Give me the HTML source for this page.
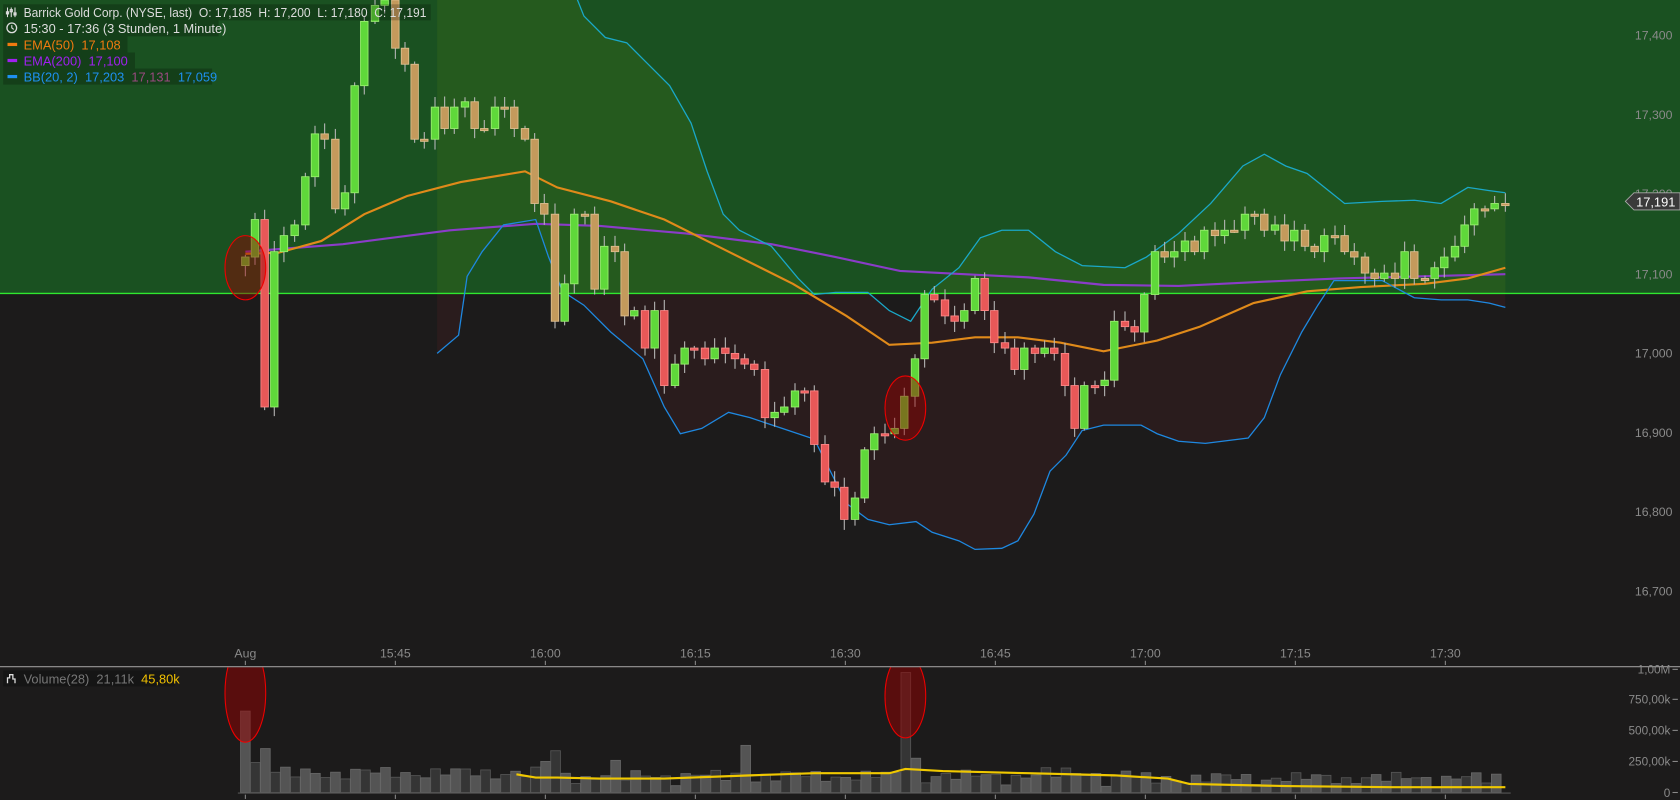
<!DOCTYPE html>
<html><head><meta charset="utf-8"><style>
html,body{margin:0;padding:0;background:#1c1b1b;overflow:hidden}
svg{display:block}
text{font-family:"Liberation Sans",sans-serif;white-space:pre}
</style></head><body>
<svg id="s" width="1680" height="800" viewBox="0 0 1568 747" preserveAspectRatio="none" xmlns="http://www.w3.org/2000/svg">
<defs>
<clipPath id="ca"><rect x="0" y="-20" width="1568" height="294"/></clipPath>
<clipPath id="cb"><rect x="0" y="274" width="1568" height="348"/></clipPath>
<clipPath id="cm"><rect x="0" y="0" width="1568" height="622"/></clipPath>
<clipPath id="vc"><rect x="0" y="623" width="1568" height="130"/></clipPath>
</defs>
<rect x="0" y="0" width="1568" height="747" fill="#1c1b1b"/>
<rect x="0" y="0" width="1568" height="274" fill="#1a5121"/>
<g id="band"></g>
<line x1="0" y1="274" x2="1568" y2="274" stroke="#2fe82f" stroke-width="1.3"/>
<g id="lines" clip-path="url(#cm)"></g>
<g id="candles" clip-path="url(#cm)"></g>
<g id="vol"></g>
<ellipse cx="229" cy="250" rx="19" ry="30" fill="rgba(150,0,0,0.45)" stroke="#e00" stroke-width="1"/>
<ellipse cx="845" cy="381" rx="19" ry="30" fill="rgba(150,0,0,0.45)" stroke="#e00" stroke-width="1"/>
<g clip-path="url(#vc)">
<ellipse cx="229" cy="647" rx="19" ry="46" fill="rgba(150,0,0,0.5)" stroke="#e00" stroke-width="1"/>
<ellipse cx="845" cy="650" rx="19" ry="39" fill="rgba(150,0,0,0.5)" stroke="#e00" stroke-width="1"/>
</g>
<g font-size="11.5" fill="#8a8a8a" text-anchor="end">
<text x="1561" y="37">17,400</text><text x="1561" y="111">17,300</text><text x="1561" y="185">17,200</text>
<text x="1561" y="260">17,100</text><text x="1561" y="334">17,000</text><text x="1561" y="408">16,900</text>
<text x="1561" y="482">16,800</text><text x="1561" y="556">16,700</text>
</g>
<path d="M1517 188 L1525 180 L1568 180 L1568 196 L1525 196 Z" fill="#3a3a3a" stroke="#aaa" stroke-width="0.8"/>
<text x="1527" y="193" font-size="12" fill="#fff">17,191</text>
<g font-size="11.5" fill="#8a8a8a" text-anchor="middle">
<text x="229" y="614">Aug</text><text x="369" y="614">15:45</text><text x="509" y="614">16:00</text>
<text x="649" y="614">16:15</text><text x="789" y="614">16:30</text><text x="929" y="614">16:45</text>
<text x="1069" y="614">17:00</text><text x="1209" y="614">17:15</text><text x="1349" y="614">17:30</text>
</g>
<g stroke="#888" stroke-width="1">
<line x1="229" y1="617" x2="229" y2="621"/><line x1="369" y1="617" x2="369" y2="621"/><line x1="509" y1="617" x2="509" y2="621"/><line x1="649" y1="617" x2="649" y2="621"/><line x1="789" y1="617" x2="789" y2="621"/><line x1="929" y1="617" x2="929" y2="621"/><line x1="1069" y1="617" x2="1069" y2="621"/><line x1="1209" y1="617" x2="1209" y2="621"/><line x1="1349" y1="617" x2="1349" y2="621"/>
<line x1="229" y1="742" x2="229" y2="746"/><line x1="369" y1="742" x2="369" y2="746"/><line x1="509" y1="742" x2="509" y2="746"/><line x1="649" y1="742" x2="649" y2="746"/><line x1="789" y1="742" x2="789" y2="746"/><line x1="929" y1="742" x2="929" y2="746"/><line x1="1069" y1="742" x2="1069" y2="746"/><line x1="1209" y1="742" x2="1209" y2="746"/><line x1="1349" y1="742" x2="1349" y2="746"/>
</g>
<line x1="0" y1="622.5" x2="1568" y2="622.5" stroke="#999" stroke-width="1"/>
<g font-size="11" fill="#8a8a8a" text-anchor="end">
<text x="1559" y="629">1,00M</text><text x="1559" y="657">750,00k</text><text x="1559" y="686">500,00k</text><text x="1559" y="715">250,00k</text><text x="1559" y="744">0</text>
</g>
<g stroke="#8a8a8a"><line x1="1561" y1="625" x2="1566" y2="625"/><line x1="1561" y1="653" x2="1566" y2="653"/><line x1="1561" y1="682" x2="1566" y2="682"/><line x1="1561" y1="711" x2="1566" y2="711"/><line x1="1561" y1="740" x2="1566" y2="740"/></g>
<g font-size="12">
<rect x="3" y="4" width="399" height="15" fill="rgba(0,0,0,0.22)"/>
<rect x="3" y="19" width="201" height="15" fill="rgba(0,0,0,0.22)"/>
<rect x="3" y="34" width="116" height="15" fill="rgba(0,0,0,0.22)"/>
<rect x="3" y="49" width="123" height="15" fill="rgba(0,0,0,0.22)"/>
<rect x="3" y="64" width="195" height="15" fill="rgba(0,0,0,0.22)"/>
<g stroke="#ddd" stroke-width="1" fill="none"><line x1="7" y1="7" x2="7" y2="16"/><line x1="10.5" y1="7" x2="10.5" y2="16"/><line x1="14" y1="7" x2="14" y2="16"/><rect x="6" y="11" width="2" height="2"/><rect x="9.5" y="9" width="2" height="2"/><rect x="13" y="12" width="2" height="2"/></g>
<text x="22" y="16" fill="#ddd" textLength="376" lengthAdjust="spacingAndGlyphs">Barrick Gold Corp. (NYSE, last)  O: 17,185  H: 17,200  L: 17,180  C: 17,191</text>
<circle cx="11" cy="26" r="4.5" fill="none" stroke="#ddd" stroke-width="1.2"/><path d="M11 23.5 V26 L12.8 27.5" stroke="#ddd" fill="none" stroke-width="1"/>
<text x="22" y="31" fill="#ddd">15:30 - 17:36 (3 Stunden, 1 Minute)</text>
<rect x="7" y="40" width="9" height="3" fill="#f07a10"/><text x="22" y="46" fill="#f07a10">EMA(50)  17,108</text>
<rect x="7" y="55" width="9" height="3" fill="#a020f0"/><text x="22" y="61" fill="#a020f0">EMA(200)  17,100</text>
<rect x="7" y="70" width="9" height="3" fill="#1e90f0"/><text x="22" y="76" fill="#1e90f0">BB(20, 2)  17,203  <tspan fill="#9a4a80">17,131</tspan>  17,059</text>
<rect x="3" y="626" width="160" height="15" fill="rgba(0,0,0,0.22)"/>
<path d="M7 638 V633 H9 V630 H12 V634 H14 V638" fill="none" stroke="#ddd" stroke-width="1.2"/>
<text x="22" y="638" fill="#777">Volume(28)  21,11k  <tspan fill="#f0c000">45,80k</tspan></text>
</g>
</svg>
<script>
var NS="http://www.w3.org/2000/svg";
function el(p,t,a){var e=document.createElementNS(NS,t);for(var k in a)e.setAttribute(k,a[k]);p.appendChild(e);return e;}
function pts(a){return a.map(function(p){return p[0]+","+p[1]}).join(" ");}
(function(){
var up=[[408,-10],[535,-10],[545,15],[565,35],[585,40],[600,55],[625,80],[645,115],[660,160],[675,200],[690,215],[720,230],[745,260],[760,275],[780,273],[810,273],[830,290],[850,300],[870,270],[895,250],[915,222],[935,215],[960,215],[985,235],[1010,248],[1050,250],[1070,240],[1100,218],[1130,190],[1160,155],[1180,144],[1200,155],[1220,162],[1240,178],[1255,190],[1290,188],[1320,187],[1345,190],[1370,175],[1390,178],[1405,180]];
var lo=[[408,330],[428,313],[436,258],[450,235],[470,210],[500,205],[512,240],[525,272],[545,285],[570,310],[600,335],[620,380],[635,405],[655,400],[680,385],[700,390],[730,400],[760,410],[790,470],[810,485],[830,490],[855,487],[870,497],[895,505],[910,513],[935,512],[950,505],[965,480],[980,440],[995,425],[1010,402],[1030,397],[1065,397],[1080,405],[1100,412],[1125,414],[1165,409],[1180,390],[1195,350],[1215,310],[1230,285],[1245,262],[1290,262],[1320,278],[1345,280],[1370,280],[1390,283],[1405,287]];
var poly=pts(up.concat(lo.slice().reverse()));
var band=document.getElementById("band");
el(band,"polygon",{points:poly,fill:"#255a1e","clip-path":"url(#ca)"});
el(band,"polygon",{points:poly,fill:"#2a1c1d","clip-path":"url(#cb)"});
var L=document.getElementById("lines");
var ema50=[[229,237],[260,236],[300,225],[340,200],[380,183],[430,170],[490,160],[520,175],[570,188],[620,205],[680,235],[740,265],[790,295],[830,322],[870,320],[910,315],[950,315],[990,320],[1030,328],[1080,318],[1120,305],[1170,283],[1220,272],[1270,268],[1330,265],[1370,260],[1405,250]];
var ema200=[[229,235],[320,228],[420,215],[500,209],[560,211],[640,218],[720,228],[780,240],[840,253],[900,256],[960,259],[1030,266],[1100,267],[1180,263],[1250,260],[1405,256]];
el(L,"polyline",{points:pts(ema200),fill:"none",stroke:"#8a3cc8","stroke-width":2});
el(L,"polyline",{points:pts(ema50),fill:"none",stroke:"#e08a1a","stroke-width":2});
el(L,"polyline",{points:pts(up),fill:"none",stroke:"#1aa8c8","stroke-width":1.2});
el(L,"polyline",{points:pts(lo),fill:"none",stroke:"#1e88e0","stroke-width":1.2});
var kf=[[229,240],[238,205],[247,380],[256,235],[265,220],[275,210],[285,165],[294,125],[303,130],[313,195],[322,180],[331,80],[340,20],[350,5],[359,0],[369,45],[378,60],[387,130],[396,130],[406,100],[415,120],[424,100],[434,95],[443,120],[452,120],[462,100],[471,100],[480,120],[490,130],[499,190],[508,200],[518,300],[527,265],[536,200],[546,200],[555,270],[564,230],[574,235],[583,295],[592,290],[602,325],[611,290],[620,360],[630,340],[639,325],[648,325],[658,335],[667,325],[677,330],[686,335],[695,340],[704,345],[714,390],[723,385],[732,380],[742,365],[751,365],[760,415],[770,450],[779,455],[788,485],[798,465],[807,420],[816,405],[826,405],[835,400],[844,370],[854,335],[863,275],[872,280],[882,295],[891,300],[900,290],[910,260],[919,290],[928,320],[938,325],[947,345],[956,325],[966,330],[975,325],[984,330],[994,360],[1003,400],[1012,360],[1022,360],[1031,355],[1040,300],[1050,305],[1059,310],[1068,275],[1078,235],[1087,240],[1096,235],[1106,225],[1115,235],[1124,215],[1134,220],[1143,215],[1152,215],[1162,200],[1171,200],[1180,215],[1190,210],[1199,225],[1208,215],[1218,230],[1227,235],[1236,220],[1246,220],[1255,235],[1264,240],[1274,255],[1283,260],[1292,255],[1302,260],[1311,235],[1320,260],[1330,260],[1339,250],[1348,240],[1358,230],[1367,210],[1376,195],[1386,195],[1395,190],[1405,190]];
var C=document.getElementById("candles");
var prev=kf[0][1]+8;
for(var i=0;i<kf.length;i++){
 var x=kf[i][0],c=kf[i][1],o=prev;
 var hi=Math.min(o,c)-2-Math.abs(Math.sin(i*3.7))*8, lw=Math.max(o,c)+2+Math.abs(Math.cos(i*2.3))*8;
 var g=c<o; var yt=Math.min(o,c),h=Math.max(Math.abs(c-o),2);
 var mid=yt+h/2;
 var col=g?"#5fd83a":(mid<274?"#c49a5c":"#e85858");
 var bd=g?"#9af070":(mid<274?"#e0c090":"#ff8888");
 el(C,"line",{x1:x,y1:hi,x2:x,y2:lw,stroke:"#b8b8b8","stroke-width":1});
 el(C,"rect",{x:x-3.5,y:yt,width:7,height:h,fill:col,stroke:bd,"stroke-width":0.8});
 prev=c;
}
var V=document.getElementById("vol");
var n=126;
for(var i=0;i<n;i++){
 var x=229+i*9.34;
 var v=8+Math.abs(Math.sin(i*1.9))*10+Math.abs(Math.sin(i*0.37))*6-(i>30&&i<80?3:0)-(i>85?5:0);
 if(i==0)v=76;if(i==1)v=28;if(i==2)v=41;if(i==66)v=112;if(i==50)v=44;if(i==31)v=39;if(i==30)v=29;if(i==88)v=20;if(i==37)v=30;if(i==67)v=32;
 if(v<3)v=3;
 var dk=(Math.sin(i*2.7)>0.2);
 el(V,"rect",{x:x-4.5,y:740-v,width:9,height:v,fill:dk?"#353535":"#545454",stroke:dk?"#555":"#666","stroke-width":0.8});
}
var ma=[[482,723],[500,726],[520,726],[560,727],[620,727],[700,724],[760,722],[830,722],[845,718],[880,720],[960,722],[1040,724],[1090,727],[1110,732],[1200,734],[1300,735],[1405,735]];
el(V,"polyline",{points:pts(ma),fill:"none",stroke:"#f0c800","stroke-width":2});
el(V,"line",{x1:222,y1:740.5,x2:1410,y2:740.5,stroke:"#555","stroke-width":1});
})();
</script>
</body></html>
